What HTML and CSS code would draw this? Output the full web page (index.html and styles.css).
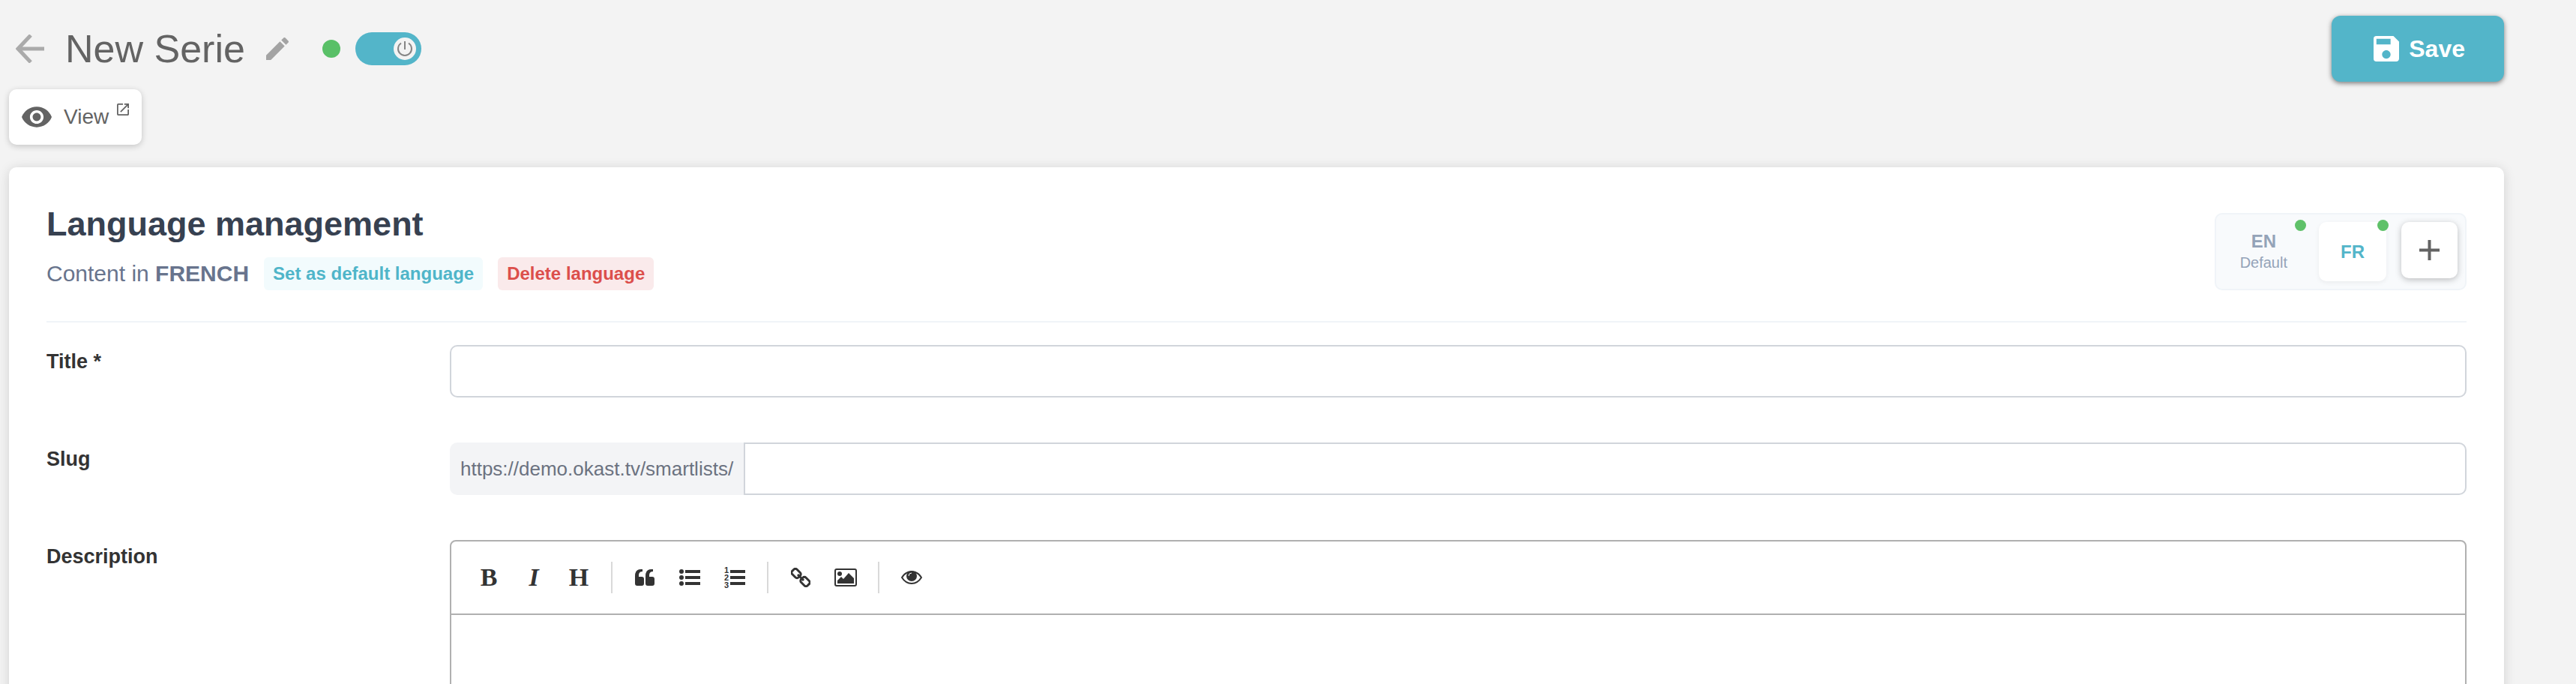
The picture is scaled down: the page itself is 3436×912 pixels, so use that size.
FILE: index.html
```
<!DOCTYPE html>
<html lang="en">
<head>
    <meta charset="UTF-8">
    <title>New Serie</title>
    <link rel="stylesheet" href="styles.css">
</head>
<body>
<div class="page">
    <header class="top">
        <a class="back" href="#" aria-label="Back">
            <svg width="38" height="38" viewBox="0 0 38 38"><path d="M20 1L3 19l17 18M2 19h36" fill="none" stroke="#aaa" stroke-width="5"/></svg>
        </a>
        <h1>New Serie</h1>
        <button class="edit" type="button" aria-label="Edit title">
            <svg width="30" height="30" viewBox="3 3 18 18"><path fill="#a3a3a3" d="M3 17.25V21h3.75L17.81 9.94l-3.75-3.75L3 17.25zM20.71 7.04c.39-.39.39-1.02 0-1.41l-2.34-2.34a.996.996 0 0 0-1.41 0l-1.83 1.83 3.75 3.75 1.83-1.83z"/></svg>
        </button>
        <span class="status"></span>
        <label class="switch">
            <input type="checkbox" checked aria-label="Online">
            <svg width="30" height="30" viewBox="0 0 30 30"><circle cx="15" cy="15" r="15" fill="#f3f3f3"/><path d="M15 5v11M10 7.500a9 9 0 1 0 10 0" fill="none" stroke="#858585" stroke-width="2"/></svg>
        </label>
        <button class="save" type="button">
            <svg width="34" height="34" viewBox="3 3 18 18"><path fill="#fff" d="M17 3H5a2 2 0 0 0-2 2v14a2 2 0 0 0 2 2h14c1.100 0 2-.9 2-2V7l-4-4zm-5 16c-1.660 0-3-1.340-3-3s1.340-3 3-3 3 1.340 3 3-1.340 3-3 3zm3-10H5V5h10v4z"/></svg>
            Save
        </button>
    </header>

    <a class="view" href="#">
        <svg width="40" height="28" viewBox="1 4.500 22 15"><path fill="#636363" d="M12 4.500C7 4.500 2.730 7.610 1 12c1.730 4.390 6 7.500 11 7.500s9.270-3.110 11-7.500c-1.730-4.390-6-7.500-11-7.500zM12 17c-2.760 0-5-2.240-5-5s2.240-5 5-5 5 2.240 5 5-2.240 5-5 5zm0-8c-1.660 0-3 1.340-3 3s1.340 3 3 3 3-1.340 3-3-1.340-3-3-3z"/></svg>
        <span>View</span>
        <svg class="ext" width="16" height="16" viewBox="3 3 18 18"><path fill="#636363" d="M19 19H5V5h7V3H5a2 2 0 0 0-2 2v14a2 2 0 0 0 2 2h14c1.100 0 2-.9 2-2v-7h-2v7zM14 3v2h3.590l-9.830 9.830 1.410 1.410L19 6.410V10h2V3h-7z"/></svg>
    </a>

    <main class="card">
        <div class="card-head">
            <div>
                <h2>Language management</h2>
                <div class="sub">
                    <span>Content in <b>FRENCH</b></span>
                    <button class="pill default" type="button">Set as default language</button>
                    <button class="pill delete" type="button">Delete language</button>
                </div>
            </div>
            <div class="langs">
                <button class="lang" type="button">EN<small>Default</small><i class="dot"></i></button>
                <button class="lang active" type="button">FR<i class="dot"></i></button>
                <button class="add" type="button" aria-label="Add language">
                    <svg width="27" height="27" viewBox="0 0 27 27"><path d="M13.500 0v27M0 13.500h27" stroke="#636363" stroke-width="4"/></svg>
                </button>
            </div>
        </div>

        <form>
            <div class="row">
                <label for="title">Title *</label>
                <input class="field" id="title" type="text">
            </div>
            <div class="row">
                <label for="slug">Slug</label>
                <div class="group">
                    <span class="prefix">https://demo.okast.tv/smartlists/</span>
                    <input class="field" id="slug" type="text">
                </div>
            </div>
            <div class="row">
                <label for="description">Description</label>
                <div class="editor">
                    <div class="toolbar">
                        <button type="button">B</button>
                        <button class="italic" type="button">I</button>
                        <button type="button">H</button>
                        <span class="sep"></span>
                        <button type="button" aria-label="Quote">
                            <svg width="26" height="24" viewBox="0 0 26 24"><path d="M10 1v3C6 4 5 6.500 5 10v1h4q3 0 3 3v6q0 3-3 3H3q-3 0-3-3V10Q0 1 8 1z"/><path d="M24 1v3c-4 0-5 2.500-5 6v1h4q3 0 3 3v6q0 3-3 3h-6q-3 0-3-3V10q0-9 8-9z"/></svg>
                        </button>
                        <button type="button" aria-label="Bullet list">
                            <svg width="28" height="24" viewBox="0 0 28 24"><circle cx="3" cy="4" r="3"/><circle cx="3" cy="12" r="3"/><circle cx="3" cy="20" r="3"/><path d="M8 2h20v4H8zM8 10h20v4H8zM8 18h20v4H8z"/></svg>
                        </button>
                        <button type="button" aria-label="Numbered list">
                            <svg class="ol" width="28" height="30" viewBox="0 0 28 30"><text x="0" y="9">1</text><text x="0" y="19">2</text><text x="0" y="29">3</text><path d="M8 5h20v4H8zM8 13h20v4H8zM8 21h20v4H8z"/></svg>
                        </button>
                        <span class="sep"></span>
                        <button type="button" aria-label="Link">
                            <svg width="26" height="26" viewBox="0 0 26 26"><g fill="none" stroke="#333" stroke-width="3"><rect x="1" y="3" width="12" height="9" rx="3" transform="rotate(45 7 7.500)"/><rect x="13" y="14" width="12" height="9" rx="3" transform="rotate(45 19 18.500)"/><path d="M9 9l8 8"/></g></svg>
                        </button>
                        <button type="button" aria-label="Image">
                            <svg width="30" height="24" viewBox="0 0 30 24"><rect x="1" y="1" width="28" height="22" rx="2" fill="none" stroke="#333" stroke-width="2"/><circle cx="7" cy="7" r="3"/><path d="M4 20v-4l5-5 3 3 7-8 7 7v7z"/></svg>
                        </button>
                        <span class="sep"></span>
                        <button type="button" aria-label="Preview">
                            <svg width="28" height="18" viewBox="0 0 28 18"><path d="M1 9q5-8 13-8t13 8q-5 8-13 8T1 9z" fill="none" stroke="#333" stroke-width="2"/><circle cx="14" cy="7" r="7"/><path d="M10 7q0-4 4-4" fill="none" stroke="#fff" stroke-width="1"/></svg>
                        </button>
                    </div>
                    <textarea id="description"></textarea>
                </div>
            </div>
        </form>
    </main>
</div>
</body>
</html>
```
FILE: styles.css
```
* {
    box-sizing: border-box;
    margin: 0;
    padding: 0;
}

body {
    background: #f3f3f3;
    color: #636363;
    font-family: "Liberation Sans", Arial, sans-serif;
}

svg {
    display: block;
}

button {
    border: none;
    background: none;
    font-family: inherit;
    cursor: pointer;
}

.page {
    height: 100vh;
    padding: 21px 96px 0 12px;
    overflow: hidden;
}

/* top bar */
.top {
    display: flex;
    align-items: center;
    height: 88px;
    margin-bottom: 10px;
}
.back {
    margin: 0 28px 0 9px;
}
.top h1 {
    font-size: 52px;
    font-weight: normal;
    line-height: 60px;
}
.edit {
    margin: 0 45px 0 28px;
}
.status {
    width: 24px;
    height: 24px;
    margin-right: 20px;
    border-radius: 50%;
    background: #59c067;
}
.switch {
    position: relative;
}
.switch input {
    display: block;
    width: 88px;
    height: 44px;
    border-radius: 22px;
    background: #53b5c9;
    appearance: none;
}
.switch svg {
    position: absolute;
    top: 7px;
    right: 7px;
}
.save {
    display: flex;
    align-items: center;
    gap: 13px;
    height: 88px;
    margin-left: auto;
    padding: 0 52px 0 56px;
    border-radius: 12px;
    background: #53b5c9;
    color: #fff;
    font-size: 32px;
    font-weight: bold;
    box-shadow: 0 2px 6px rgba(0, 0, 0, .5);
}

.view {
    display: flex;
    align-items: center;
    width: max-content;
    height: 74px;
    padding: 0 17px;
    border-radius: 10px;
    background: #fff;
    color: #636363;
    font-size: 28px;
    text-decoration: none;
    box-shadow: 0 2px 8px rgba(0, 0, 0, .2);
}
.view span {
    margin: 0 11px 0 16px;
}
.view .ext {
    align-self: flex-start;
    margin-top: 19px;
}

/* card */
.card {
    margin-top: 30px;
    padding: 48px 50px;
    border-radius: 10px;
    background: #fff;
    box-shadow: 0 2px 16px rgba(0, 0, 0, .14);
}
.card-head {
    display: flex;
    align-items: flex-end;
    justify-content: space-between;
    padding-bottom: 41px;
    border-bottom: 2px solid #f0f4f8;
}
.card h2 {
    margin-bottom: 16px;
    color: #374151;
    font-size: 45px;
    line-height: 56px;
}
.sub {
    display: flex;
    align-items: center;
    gap: 20px;
    color: #68748d;
    font-size: 30px;
}
.pill {
    height: 44px;
    padding: 0 12px;
    border-radius: 6px;
    font-size: 24px;
    font-weight: bold;
}
.default {
    background: #f2fbfd;
    color: #4fb5c9;
}
.delete {
    background: #faeaeb;
    color: #dc4f4b;
}

.langs {
    display: flex;
    gap: 20px;
    padding: 10px;
    border: 2px solid #f0f4f8;
    border-radius: 10px;
    background: #f8fafc;
}
.lang {
    position: relative;
    height: 79px;
    padding: 0 22px;
    border-radius: 10px;
    color: #94a3b8;
    font-size: 24px;
    font-weight: bold;
    line-height: 28px;
}
.lang small {
    display: block;
    font-size: 20px;
    font-weight: normal;
}
.lang.active {
    min-width: 90px;
    background: #fff;
    color: #53b5c9;
    box-shadow: 0 2px 6px rgba(0, 0, 0, .06);
}
.dot {
    position: absolute;
    top: -3px;
    right: -3px;
    width: 15px;
    height: 15px;
    border-radius: 50%;
    background: #5fc169;
}
.add {
    display: flex;
    align-items: center;
    justify-content: center;
    width: 75px;
    height: 75px;
    border-radius: 10px;
    background: #fff;
    box-shadow: 0 2px 8px rgba(0, 0, 0, .25);
}

/* form */
.row {
    display: grid;
    grid-template-columns: 1fr 5fr;
    margin: 30px 0 60px;
}
.row + .row {
    margin-top: 0;
}
.row label {
    color: #333;
    font-size: 27px;
    font-weight: bold;
    line-height: 44px;
}
.field {
    width: 100%;
    height: 70px;
    padding: 0 16px;
    border: 2px solid #d1d5db;
    border-radius: 10px;
    background: #fff;
    font-size: 26px;
}
.group {
    display: flex;
}
.prefix {
    padding: 0 14px;
    border-radius: 10px 0 0 10px;
    background: #f3f4f6;
    color: #6b7280;
    font-size: 26px;
    line-height: 70px;
}
.group .field {
    flex: 1;
    border-radius: 0 10px 10px 0;
}

.editor {
    border: 2px solid #b0b0b0;
    border-radius: 8px;
}
.toolbar {
    display: flex;
    align-items: center;
    height: 98px;
    padding: 0 20px;
    border-bottom: 2px solid #b0b0b0;
}
.toolbar button {
    display: flex;
    align-items: center;
    justify-content: center;
    width: 60px;
    height: 60px;
    color: #333;
    font-family: "Liberation Serif", serif;
    font-size: 34px;
    font-weight: bold;
}
.toolbar svg {
    fill: #333;
}
.toolbar .italic {
    font-style: italic;
}
.ol text {
    font: bold 11px "Liberation Sans", sans-serif;
}
.sep {
    width: 2px;
    height: 42px;
    margin: 0 13px;
    background: #d9d9d9;
}
.editor textarea {
    display: block;
    width: 100%;
    height: 400px;
    padding: 20px;
    border: none;
    background: none;
    font-size: 26px;
    resize: none;
}
```
